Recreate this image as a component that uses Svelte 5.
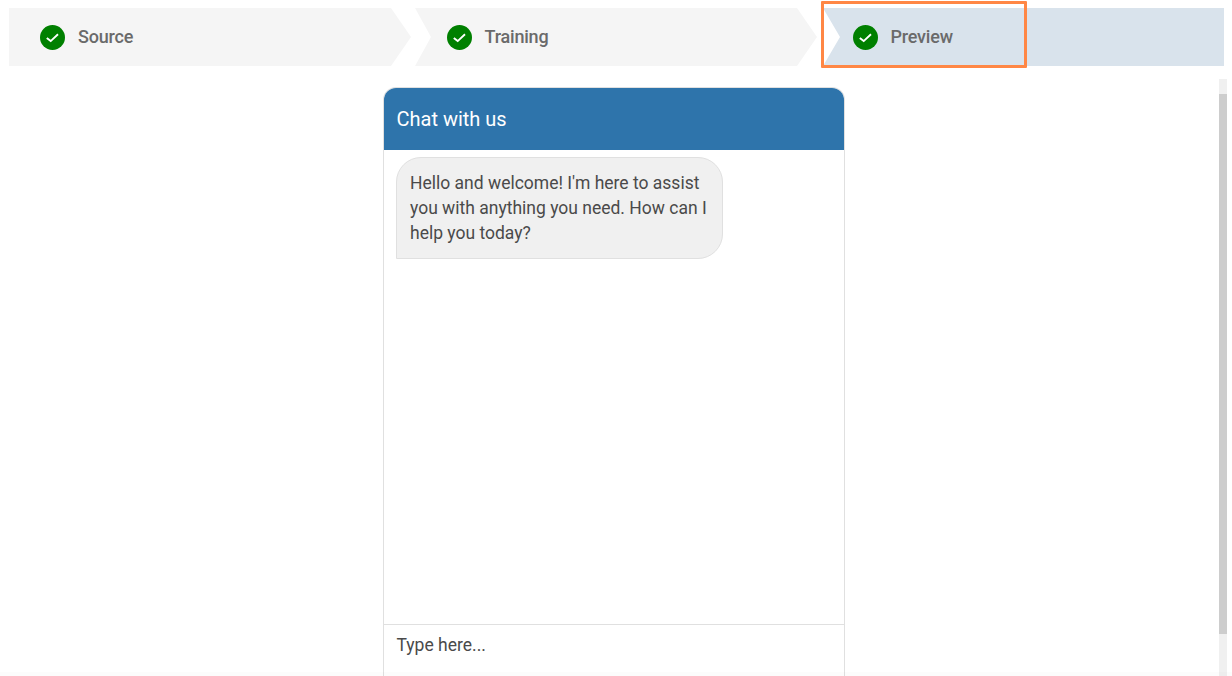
<script>
  const steps = [
    { label: 'Source', cls: 'first' },
    { label: 'Training', cls: 'middle' },
    { label: 'Preview', cls: 'last' }
  ];
</script>

<div class="page">
  <nav class="steps">
    {#each steps as step}
      <div class="step {step.cls}">
        <svg class="check" width="25" height="25" viewBox="0 0 25 25" aria-hidden="true">
          <circle cx="12.5" cy="12.5" r="12.5" fill="#008000" />
          <path d="M6.8 12.9 10.7 16.1 18 9.3" fill="none" stroke="#fff" stroke-width="1.9" />
        </svg>
        <span>{step.label}</span>
      </div>
    {/each}
    <div class="focus-ring"></div>
  </nav>

  <main class="content">
    <section class="chat">
      <header class="chat-head">Chat with us</header>
      <div class="messages">
        <p class="bubble">Hello and welcome! I'm here to assist you with anything you need. How can I help you today?</p>
      </div>
      <div class="composer">Type here...</div>
    </section>
    <div class="scrollbar"><div class="thumb"></div></div>
  </main>
  <div class="fade"></div>
</div>

<style>
  :global(body) {
    margin: 0;
    background: #fff;
    overflow: hidden;
  }
  .page {
    position: relative;
    height: 676px;
    overflow: hidden;
    font-family: Roboto, "Liberation Sans", sans-serif;
  }
  .steps {
    position: relative;
    display: flex;
    height: 58px;
    padding: 8px 8px 0 9px;
    gap: 4px;
    font-size: 18px;
    font-weight: 500;
    color: #6a6a6a;
  }
  .step {
    display: flex;
    align-items: center;
    gap: 13px;
    box-sizing: border-box;
    height: 58px;
    background: #f5f5f5;
  }
  .step span {
    position: relative;
    top: -1px;
    letter-spacing: -0.2px;
  }
  .first {
    width: 402px;
    padding-left: 31px;
    clip-path: polygon(0 0, 382px 0, 402px 50%, 382px 100%, 0 100%);
  }
  .middle {
    width: 402px;
    padding-left: 32px;
    gap: 12.5px;
    clip-path: polygon(0 0, 382px 0, 402px 50%, 382px 100%, 0 100%, 16px 50%);
  }
  .last {
    flex: 1;
    margin-left: 2px;
    padding-left: 30px;
    gap: 12.5px;
    background: #d9e3ec;
    clip-path: polygon(0 0, 100% 0, 100% 100%, 0 100%, 17px 50%);
  }
  .check { flex: none; }
  .focus-ring {
    position: absolute;
    left: 821px;
    top: 1px;
    width: 200px;
    height: 61px;
    border: 3px solid #ff8745;
    border-radius: 1px;
  }
  .content {
    display: flex;
    height: 610px;
    margin-top: 21px;
  }
  .chat {
    display: flex;
    flex-direction: column;
    box-sizing: border-box;
    width: 462px;
    height: 589px;
    margin-left: 383px;
    background: #fff;
    border: 1px solid #e0e0e0;
    border-bottom: 0;
    border-radius: 13px 13px 0 0;
  }
  .chat-head {
    flex: none;
    height: 62px;
    padding-left: 12.5px;
    line-height: 62px;
    background: #2e74ab;
    border-radius: 12px 12px 0 0;
    color: #fff;
    font-size: 20px;
    font-weight: 400;
  }
  .messages {
    flex: 1;
    padding: 7px 12px;
  }
  .bubble {
    box-sizing: border-box;
    width: 327px;
    margin: 0;
    padding: 13px 13px 11.5px;
    background: #f0f0f0;
    border: 1px solid #e0e0e0;
    border-radius: 25px 25px 25px 0;
    color: #4a4a4a;
    font-size: 17.5px;
    font-weight: 400;
    line-height: 25px;
  }
  .composer {
    flex: none;
    height: 52px;
    padding: 8px 13px 0 12.5px;
    border-top: 1px solid #e0e0e0;
    box-sizing: border-box;
    color: #4a4a4a;
    font-size: 17.5px;
    font-weight: 400;
    line-height: 25px;
  }
  .scrollbar {
    width: 8px;
    height: 597px;
    margin-left: 374px;
    margin-top: -8px;
    padding-top: 15px;
    box-sizing: border-box;
    background: #f0f0f0;
  }
  .thumb {
    height: 540px;
    background: #cdcdcd;
  }
  .fade {
    position: absolute;
    left: 0;
    right: 0;
    bottom: 0;
    height: 4px;
    background: rgba(0, 0, 0, 0.012);
  }
</style>
